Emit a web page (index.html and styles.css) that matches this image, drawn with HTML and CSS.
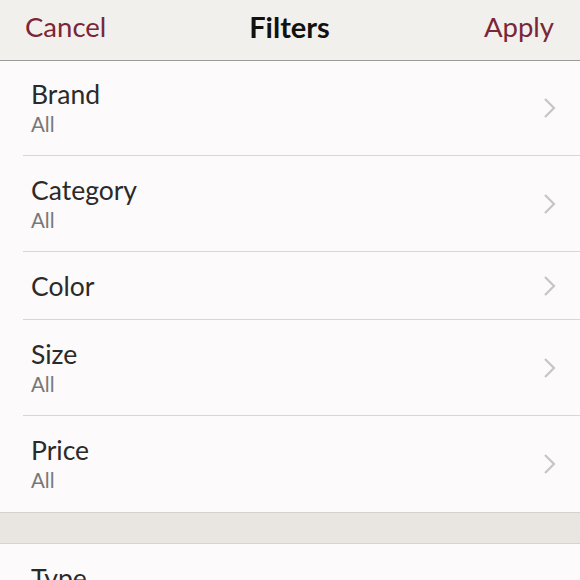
FILE: index.html
```html
<!DOCTYPE html>
<html>
	<head>
		<meta charset="utf-8" />
		<title>Filters</title>
		<link rel="stylesheet" href="styles.css">
	</head>
	<body>
		<div class="nav-bar">
			<span class="nav-btn">Cancel</span>
			<span class="nav-title">Filters</span>
			<span class="nav-btn right">Apply</span>
		</div>

		<div class="list">
			<div class="row">
				<div class="row-text">
					<div class="row-label">Brand</div>
					<div class="row-value">All</div>
				</div>
				<svg class="chevron" viewBox="0 0 14 22"><path d="M2 2 L11 11 L2 20" /></svg>
			</div>
			<div class="row">
				<div class="row-text">
					<div class="row-label">Category</div>
					<div class="row-value">All</div>
				</div>
				<svg class="chevron" viewBox="0 0 14 22"><path d="M2 2 L11 11 L2 20" /></svg>
			</div>
			<div class="row single">
				<div class="row-text">
					<div class="row-label">Color</div>
				</div>
				<svg class="chevron" viewBox="0 0 14 22"><path d="M2 2 L11 11 L2 20" /></svg>
			</div>
			<div class="row">
				<div class="row-text">
					<div class="row-label">Size</div>
					<div class="row-value">All</div>
				</div>
				<svg class="chevron" viewBox="0 0 14 22"><path d="M2 2 L11 11 L2 20" /></svg>
			</div>
			<div class="row">
				<div class="row-text">
					<div class="row-label">Price</div>
					<div class="row-value">All</div>
				</div>
				<svg class="chevron" viewBox="0 0 14 22"><path d="M2 2 L11 11 L2 20" /></svg>
			</div>
		</div>

		<div class="section-gap"></div>

		<div class="list">
			<div class="row">
				<div class="row-text">
					<div class="row-label">Type</div>
					<div class="row-value">All</div>
				</div>
				<svg class="chevron" viewBox="0 0 14 22"><path d="M2 2 L11 11 L2 20" /></svg>
			</div>
		</div>
	</body>
</html>
```

FILE: styles.css
```css
body {
	margin: 0;
	font-family: Lato, 'Open Sans', sans-serif;
	background: #fcfafa;
	overflow: hidden;
}

/* Navigation bar */
.nav-bar {
	height: 61px;
	display: grid;
	grid-template-columns: 1fr auto 1fr;
	align-items: center;
	padding: 0 26px 0 25px;
	background: #f2f0ed;
	border-bottom: 1px solid #9c9a98;
	box-sizing: border-box;
}

.nav-btn {
	font-size: 27.5px;
	color: #7b2636;
	padding-bottom: 8px;
}

.nav-btn.right {
	text-align: right;
}

.nav-title {
	font-size: 29px;
	font-weight: bold;
	color: #111;
	padding-bottom: 8px;
}

/* List rows */
.list {
	background: #fcfafa;
	padding-left: 23px;
}

.row {
	display: flex;
	align-items: center;
	height: 95px;
	padding-right: 23px;
	border-bottom: 1px solid #d8d6d5;
	box-sizing: border-box;
}

.list .row:nth-child(n+2) {
	height: 96px;
}

.list .row.single {
	height: 68px;
}

.list .row:last-child {
	border-bottom: none;
}

.row-text {
	flex: 1;
	padding-left: 8px;
}

.row-label {
	font-size: 26.5px;
	color: #2b2a2a;
	line-height: 32px;
}

.row-value {
	font-size: 20.5px;
	color: #777;
	line-height: 28px;
}

.chevron {
	width: 14px;
	height: 22px;
	fill: none;
	stroke: #c6c4c6;
	stroke-width: 2.2;
}

/* Section divider */
.section-gap {
	height: 32px;
	background: #e9e6e2;
	border-top: 1px solid #d3d0cd;
	border-bottom: 1px solid #d6d3d0;
	box-sizing: border-box;
}
```
